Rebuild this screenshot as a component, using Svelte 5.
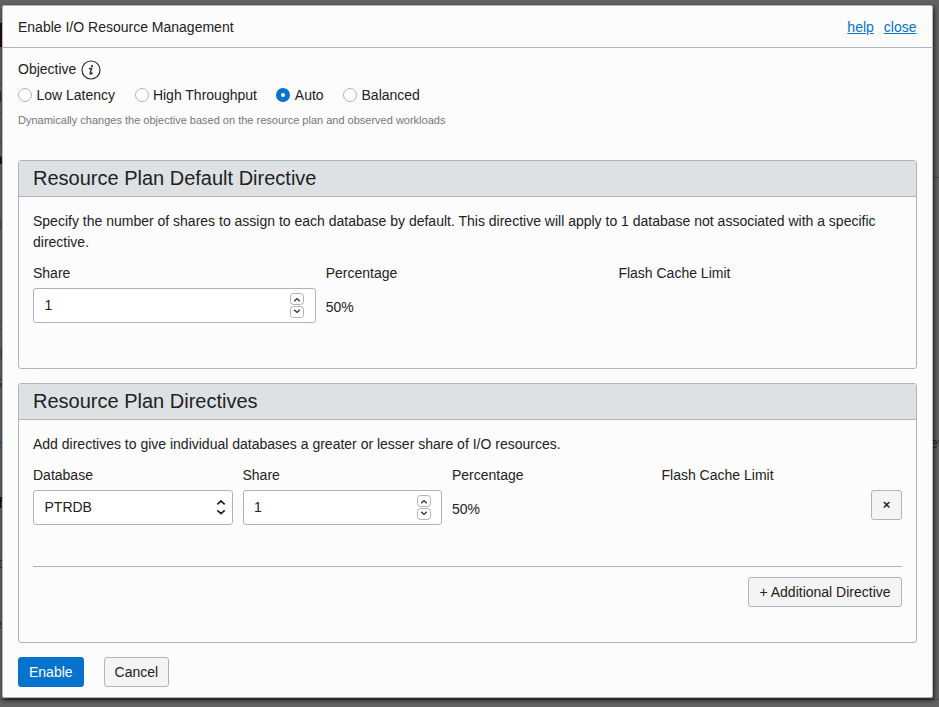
<script>
  const options = ['Low Latency', 'High Throughput', 'Auto', 'Balanced'];
  let objective = $state('Auto');
  let defaultShare = $state(1);
  let directiveShare = $state(1);

  // Page content peeking out on either side of the dialog.
  const slivers = [
    { text: 'd', x: -6, y: 89, color: '#222' },
    { text: 'n', x: -6, y: 151, color: '#111', bold: true },
    { text: 'l', x: -1, y: 217, color: '#5a4636' },
    { text: 'l', x: 0, y: 346, color: '#4a3526' },
    { text: 'S', x: -7, y: 375, color: '#46301f' },
    { text: 'e', x: -6, y: 435, color: '#15506a' },
    { text: 'f', x: -2, y: 495, color: '#111', bold: true },
    { text: 't', x: -2, y: 555, color: '#3b2a1e' },
    { text: 'e', x: -6, y: 616, color: '#222' },
    { text: 'ev', x: 930, y: 435, color: '#252525' }
  ];
  const rules = [
    { x: 0, y: 83, w: 3 },
    { x: 0, y: 112, w: 3 },
    { x: 0, y: 142, w: 3 },
    { x: 0, y: 321, w: 3 },
    { x: 0, y: 328, w: 3 },
    { x: 933, y: 177, w: 6 },
    { x: 0, y: 699, w: 939 }
  ];
</script>

{#snippet spinner(value, change)}
  <div class="field">
    <span>{value}</span>
    <span class="steppers">
      <button class="step" aria-label="Increase" onclick={() => change(1)}>
        <svg width="12" height="10" viewBox="0 0 12 10"><path d="M3.2 7.2 6 4.6 8.8 7.2" /></svg>
      </button>
      <button class="step" aria-label="Decrease" onclick={() => change(-1)}>
        <svg width="12" height="10" viewBox="0 0 12 10"><path d="M3.2 2.8 6 5.4 8.8 2.8" /></svg>
      </button>
    </span>
  </div>
{/snippet}

<div class="page">
  <div class="behind" aria-hidden="true">
    <i class="mark"></i>
    {#each slivers as s}
      <span class:bold={s.bold} style="left:{s.x}px;top:{s.y}px;color:{s.color}">{s.text}</span>
    {/each}
    {#each rules as r}
      <i class="rule" style="left:{r.x}px;top:{r.y}px;width:{r.w}px"></i>
    {/each}
  </div>

  <div class="dialog" role="dialog">
    <header>
      <span>Enable I/O Resource Management</span>
      <nav><a href="#help">help</a><a href="#close">close</a></nav>
    </header>

    <div class="content">
      <div class="objective">
        <span>Objective</span>
        <svg class="info" width="20" height="20" viewBox="0 0 20 20">
          <circle cx="10" cy="10" r="9" fill="none" stroke="#2a2a2a" stroke-width="1.2" />
          <circle cx="11" cy="6" r="1.1" fill="#222" />
          <path d="M7.9 8.8 10.6 8.4 9.2 13.2Q9 14.4 10 13.8L11.5 12.6" />
        </svg>
      </div>
      <div class="radios">
        {#each options as o}
          <button class="radio" onclick={() => (objective = o)}>
            <i class="dot" class:on={objective === o}></i><span>{o}</span>
          </button>
        {/each}
      </div>
      <p class="hint">Dynamically changes the objective based on the resource plan and observed workloads</p>

      <section class="default">
        <h2>Resource Plan Default Directive</h2>
        <div class="inner">
          <p>Specify the number of shares to assign to each database by default. This directive will apply to 1 database not associated with a specific directive.</p>
          <div class="cols three">
            <div class="col"><span class="label">Share</span>{@render spinner(defaultShare, (d) => (defaultShare += d))}</div>
            <div class="col"><span class="label">Percentage</span><span class="value">50%</span></div>
            <div class="col"><span class="label">Flash Cache Limit</span></div>
          </div>
        </div>
      </section>

      <section class="directives">
        <h2>Resource Plan Directives</h2>
        <div class="inner">
          <p>Add directives to give individual databases a greater or lesser share of I/O resources.</p>
          <div class="cols four">
            <div class="col">
              <span class="label">Database</span>
              <div class="field select">
                <span>PTRDB</span>
                <svg width="10" height="16" viewBox="0 0 10 16"><path d="M1.3 5.3 5 2 8.7 5.3M1.3 11.3 5 14.6 8.7 11.3" /></svg>
              </div>
            </div>
            <div class="col"><span class="label">Share</span>{@render spinner(directiveShare, (d) => (directiveShare += d))}</div>
            <div class="col"><span class="label">Percentage</span><span class="value">50%</span></div>
            <div class="col"><span class="label">Flash Cache Limit</span></div>
            <button class="btn remove">×</button>
          </div>
          <div class="add"><button class="btn">+ Additional Directive</button></div>
        </div>
      </section>

      <footer>
        <button class="btn primary">Enable</button>
        <button class="btn">Cancel</button>
      </footer>
    </div>
  </div>
</div>

<style>
  :global(body) { background: #636363; }
  * { box-sizing: border-box; }
  .page {
    position: relative;
    height: 707px;
    padding: 5px 6px 0 2px;
    overflow: hidden;
    background: #636363;
    font: 14px/21px "Liberation Sans", Arial, sans-serif;
    color: #222;
  }
  .behind { position: absolute; inset: 0; overflow: hidden; line-height: 17px; }
  .behind span, .behind i { position: absolute; }
  .behind .bold { font-weight: bold; }
  .mark { left: 0; top: 23px; width: 3px; height: 24px; background: #260d10; }
  .rule { height: 1px; background: #4a4a4a; }
  .dialog {
    position: relative;
    width: 931px;
    height: 693px;
    border: 1px solid #b1b8c2;
    border-radius: 2px;
    background: #fcfcfc;
    box-shadow: 1px 2px 5px rgba(0, 0, 0, 0.75);
  }
  header {
    display: flex;
    justify-content: space-between;
    align-items: center;
    height: 42px;
    padding: 1px 15.5px 0 15px;
    border-bottom: 1px solid #adb4c0;
  }
  nav { display: flex; gap: 10px; }
  a { color: #0572ce; text-decoration: underline; }
  .content { padding: 0 15px; }
  .objective { display: flex; align-items: center; gap: 5px; height: 22px; margin-top: 11px; }
  .objective span { position: relative; top: -1px; }
  .radios { display: flex; gap: 19.5px; height: 29px; align-items: center; }
  .radio {
    display: flex;
    align-items: center;
    gap: 4.4px;
    padding: 0;
    border: 0;
    background: none;
    font: inherit;
    color: inherit;
  }
  .dot { width: 14px; height: 14px; margin-bottom: 1px; border: 1px solid #adb4c0; border-radius: 50%; background: #fff; }
  .dot.on { border: 5px solid #0572ce; }
  .hint { margin: 0; height: 21px; font-size: 11px; line-height: 20px; color: #767676; }
  section { width: 899px; border: 1px solid #adb4c0; border-radius: 3px; }
  .default { height: 209px; margin-top: 29px; }
  .directives { height: 260px; margin-top: 14px; }
  h2 {
    height: 36px;
    margin: 0;
    padding-left: 14px;
    border-bottom: 1px solid #adb4c0;
    background: #dde1e4;
    font-weight: normal;
    font-size: 20px;
    line-height: 34px;
  }
  .inner { padding: 14px 14px 0; }
  p { margin: 0; }
  .cols { display: flex; gap: 10px; height: 61px; margin-top: 10px; }
  .col { display: flex; flex-direction: column; }
  .three .col { width: 282.7px; }
  .four .col { width: 199.7px; }
  .label { height: 25px; line-height: 21px; }
  .value { margin-top: 9px; }
  .field {
    display: flex;
    justify-content: space-between;
    align-items: center;
    height: 35px;
    padding: 0 10.5px 1px;
    border: 1px solid #adb4c0;
    border-radius: 3px;
    background: #fff;
  }
  .steppers { display: flex; flex-direction: column; gap: 1px; }
  .step { display: block; width: 14px; height: 12px; padding: 0; border: 1px solid #b0b0b0; border-radius: 3.5px; background: #fff; }
  .step svg { display: block; }
  path { fill: none; stroke: #333; stroke-width: 1.4; }
  .select { padding-right: 6px; }
  .select path { stroke: #222; stroke-width: 1.7; }
  .btn {
    height: 30px;
    padding: 0 10px;
    border: 1px solid #adb4c0;
    border-radius: 3px;
    background: #f4f4f4;
    font: inherit;
    line-height: 28px;
    color: #222;
    white-space: nowrap;
  }
  .remove { width: 31px; margin: 25px 0 0 auto; padding: 0; font-weight: bold; font-size: 13px; }
  .add { display: flex; justify-content: flex-end; margin-top: 40px; padding-top: 10px; border-top: 1px solid #adb4c0; }
  .add .btn { width: 154px; }
  footer { display: flex; gap: 20px; margin-top: 14px; }
  .primary { border-color: #0572ce; background: #0572ce; color: #fff; }
</style>
